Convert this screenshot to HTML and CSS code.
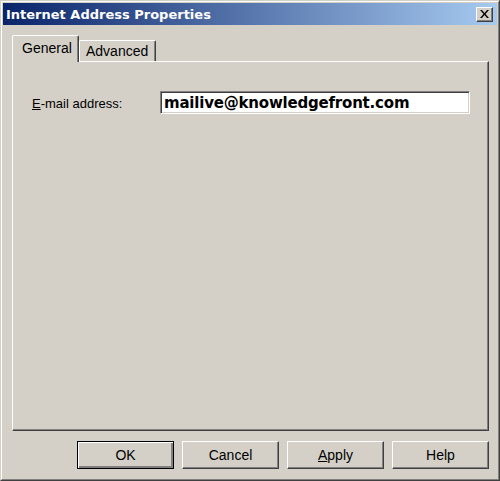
FILE: index.html
```html
<!DOCTYPE html>
<html>
<head>
<meta charset="utf-8">
<link rel="stylesheet" href="styles.css">
</head>
<body>
<div class="window">
  <div class="frame">
    <div class="titlebar">
      <span class="title">Internet Address Properties</span>
      <span class="close">
        <svg width="9" height="8" viewBox="0 0 9 8"><path d="M0 0h2l2.5 3 2.5-3h2l-3.5 4 3.5 4h-2l-2.5-3-2.5 3h-2l3.5-4z" fill="#000"/></svg>
      </span>
    </div>
    <div class="content">
      <div class="tabs">
        <div class="tab selected">General</div>
        <div class="tab">Advanced</div>
      </div>
      <div class="panel">
        <div class="row">
          <label class="label"><u>E</u>-mail address:</label>
          <div class="input">mailive@knowledgefront.com</div>
        </div>
      </div>
      <div class="buttons">
        <div class="btn default">OK</div>
        <div class="btn">Cancel</div>
        <div class="btn"><u>A</u>pply</div>
        <div class="btn">Help</div>
      </div>
    </div>
  </div>
</div>
</body>
</html>
```
FILE: styles.css
```css
html, body {
  margin: 0;
  padding: 0;
  background: #d4d0c8;
}
.window {
  width: 500px;
  height: 481px;
  box-sizing: border-box;
  border: 1px solid;
  border-color: #d4d0c8 #404040 #404040 #d4d0c8;
  background: #d4d0c8;
  font-family: "Liberation Sans", Arial, sans-serif;
  color: #000;
}
.frame {
  height: 100%;
  box-sizing: border-box;
  border: 1px solid;
  border-color: #ffffff #808080 #808080 #ffffff;
  padding: 1px;
  display: flex;
  flex-direction: column;
}
.titlebar {
  height: 22px;
  flex: none;
  background: linear-gradient(to right, #0a246a, #a6caf0);
  display: flex;
  align-items: center;
  justify-content: space-between;
  padding-left: 3px;
  padding-right: 4px;
}
.title {
  font-family: "DejaVu Sans", Verdana, sans-serif;
  font-weight: bold;
  font-size: 13px;
  color: #ffffff;
}
.close {
  width: 17px;
  height: 15px;
  box-sizing: border-box;
  background: #d4d0c8;
  border: 1px solid;
  border-color: #ffffff #404040 #404040 #ffffff;
  box-shadow: inset -1px -1px #808080;
  display: flex;
  align-items: center;
  justify-content: center;
  padding-bottom: 1px;
}
.content {
  flex: 1;
  display: flex;
  flex-direction: column;
  padding: 10px 8px 0 9px;
}
.tabs {
  display: flex;
  align-items: flex-end;
  height: 26px;
  position: relative;
  z-index: 1;
}
.tab {
  box-sizing: border-box;
  height: 21px;
  border-top: 1px solid #ffffff;
  border-left: 1px solid #ffffff;
  border-right: 1px solid #404040;
  box-shadow: inset -1px 0 #808080;
  border-radius: 2px 2px 0 0;
  font-size: 14px;
  padding: 2px 6px 0 6px;
  background: #d4d0c8;
  width: 77px;
}
.tab.selected {
  height: 27px;
  margin-bottom: -1px;
  width: 67px;
  padding: 4px 0 0 9px;
}
.panel {
  height: 370px;
  box-sizing: border-box;
  border: 1px solid;
  border-color: #ffffff #404040 #404040 #ffffff;
  box-shadow: inset -1px -1px #808080;
  padding: 29px 0 0 19px;
}
.row {
  display: flex;
  align-items: center;
}
.label {
  font-size: 13px;
  width: 128px;
  padding-top: 1px;
}
.input {
  width: 310px;
  height: 23px;
  box-sizing: border-box;
  background: #ffffff;
  border: 1px solid;
  border-color: #808080 #ffffff #ffffff #808080;
  box-shadow: inset 1px 1px #404040, inset -1px -1px #d4d0c8;
  font-family: "DejaVu Sans", Verdana, sans-serif;
  font-weight: bold;
  font-size: 15px;
  letter-spacing: -0.2px;
  padding: 1px 0 0 3px;
  line-height: 20px;
  white-space: nowrap;
}
.buttons {
  display: flex;
  justify-content: flex-end;
  gap: 8px;
  margin-top: 10px;
}
.btn {
  width: 97px;
  height: 28px;
  box-sizing: border-box;
  border: 1px solid;
  border-color: #ffffff #404040 #404040 #ffffff;
  box-shadow: inset -1px -1px #808080;
  font-size: 14px;
  display: flex;
  align-items: center;
  justify-content: center;
}
.btn.default {
  border-color: #000000;
  box-shadow: inset 1px 1px #ffffff, inset -2px -2px #808080, inset -1px -1px #404040;
}
```
